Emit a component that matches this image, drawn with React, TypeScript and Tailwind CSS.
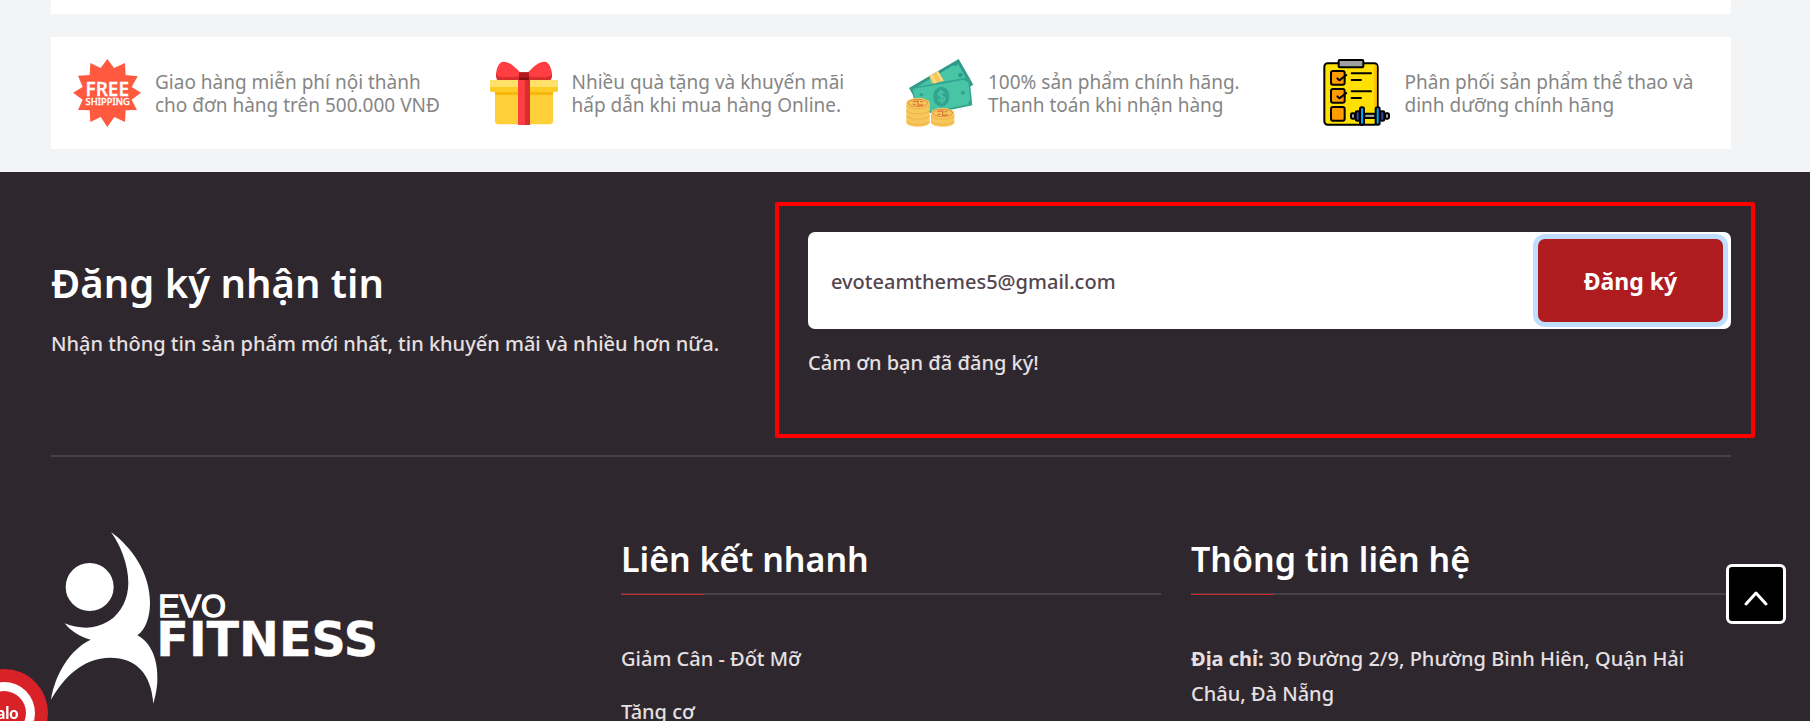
import { useState } from "react";
import type { FormEvent, ReactNode } from "react";

type Service = {
  icon: ReactNode;
  lines: [string, string];
};

function FreeShippingIcon() {
  return (
    <svg viewBox="0 0 204 204" className="size-[68px] shrink-0" aria-hidden="true">
      <path
        fill="#ff5a3f"
        d="M103 0 123 27 156 12 158 48 194 52 176 84 204 101 176 122 192 153 158 154 156 189 124 174 103 204 83 174 52 189 50 154 15 153 29 122 0 101 29 84 15 50 50 48 52 12 83 27Z"
      />
      <text x="103" y="110" textAnchor="middle" fill="#fff" stroke="#fff" strokeWidth="1" fontFamily="Open Sans, sans-serif" fontSize="57" fontWeight="600">FREE</text>
      <text x="104" y="138" textAnchor="middle" fill="#fff" stroke="#fff" strokeWidth="1" fontFamily="Noto Sans, sans-serif" fontSize="28" fontWeight="500">SHIPPING</text>
    </svg>
  );
}

function GiftIcon() {
  return (
    <svg viewBox="0 0 204 204" className="size-[68px] shrink-0" aria-hidden="true">
      <path fill="#d82d2d" d="M22 63C17 55 17 45 20 38L90 40h24l70-2c3 8 3 18-2 25Z" />
      <path fill="#ff3e43" d="M90 40C75 25 60 8 40 8 26 8 18 32 19 44c1 14 42 12 69 8ZM114 40c15-15 30-32 50-32 14 0 22 24 21 36-1 14-42 12-69 8Z" />
      <path fill="#ffcf3a" d="M15 98h174v88q0 10-10 10H25q-10 0-10-10Z" />
      <path fill="#f6b80f" d="M15 98h174v10H15Z" />
      <path fill="#ffe06a" d="M0 63h204v22H0Z" />
      <path fill="#ffcb25" d="M0 84h204v10q0 5-5 5H5q-5 0-5-5Z" />
      <path fill="#ff3e43" d="M84 63h21v135H84Z" />
      <path fill="#d82d2d" d="M105 63h15v135h-15Z" />
      <path fill="#b3191d" d="M87 40h30v23H87Z" />
      <path fill="#870f10" d="M87 56h30v7H87Z" />
    </svg>
  );
}

function CoinStack({ x, top }: { x: number; top: number }) {
  return (
    <g>
      <path fill="#f8c75b" d={`M${x} ${top}V190C${x} 208 ${x + 70} 208 ${x + 70} 190V${top}Z`} />
      {[190, 174, 158, 142].filter((y) => y > top + 8).map((y) => (
        <path key={y} fill="none" stroke="#eeb248" strokeWidth="3" d={`M${x} ${y - 4}C${x + 5} ${y + 10} ${x + 65} ${y + 10} ${x + 70} ${y - 4}`} />
      ))}
      <ellipse cx={x + 35} cy={top} rx="35" ry="15" fill="#fbd06a" />
      <ellipse cx={x + 35} cy={top} rx="30" ry="11" fill="#f8c75b" stroke="#e08a3c" strokeWidth="3" />
      <path fill="none" stroke="#dc7b37" strokeWidth="4" d={`M${x + 20} ${top - 3}q6-5 15 0v8q8 4 15-1M${x + 35} ${top - 9}V${top + 9}M${x + 20} ${top + 4}h9M${x + 41} ${top - 4}h8`} />
    </g>
  );
}

function MoneyIcon() {
  return (
    <svg viewBox="0 0 204 204" className="size-[68px] shrink-0" aria-hidden="true">
      <path fill="#2f9a8c" d="M9 87 158 0l44 77-149 86Z" />
      <path fill="#48c5a5" d="M22 90 142 19q8 6 14-5l31 55q-8 4-4 12l-130 70Z" />
      <circle cx="163" cy="48" r="7" fill="#2f9a8c" />
      <path fill="#f8c75b" d="m70 52 27-16 17 29-35 10Z" />
      <path fill="#fbe0a0" d="m74 50 4-3 15 27-5 1ZM91 40l4-3 16 28-5 1Z" />
      <path fill="#34a391" d="M16 86 190 54l9 85-120 25-50-20Z" />
      <path fill="#48c5a5" d="M21 90 175 62q3 9 12 7l6 56q-8 3-6 11L82 158 31 140Z" />
      <ellipse cx="106" cy="113" rx="24" ry="30" fill="#34a391" />
      <path fill="none" stroke="#48c5a5" strokeWidth="5" d="M115 103c-3-7-18-6-18 2s19 5 19 14-17 9-20 1M104 92l4 42" />
      <circle cx="171" cy="101" r="6" fill="#34a391" />
      <ellipse cx="46" cy="107" rx="6" ry="5" fill="#34a391" />
      <CoinStack x={1} top={132} />
      <CoinStack x={75} top={162} />
    </svg>
  );
}

function ClipboardIcon() {
  return (
    <svg viewBox="0 0 204 204" className="size-[68px] shrink-0" stroke="#000" strokeWidth="6" strokeLinecap="round" strokeLinejoin="round" aria-hidden="true">
      <rect x="4" y="13" width="160" height="184" rx="10" fill="#ffe000" />
      <path d="M153 18h8v174h-8Z" fill="#ffc400" stroke="none" />
      <rect x="47" y="3" width="74" height="22" rx="3" fill="#a0a0a0" />
      <g fill="#ff9c00">
        <rect x="24" y="36" width="41" height="41" rx="6" />
        <rect x="24" y="90" width="41" height="41" rx="6" />
        <rect x="24" y="144" width="41" height="41" rx="6" />
      </g>
      <path fill="none" d="m43 58 6 6 21-16M43 112l6 6 21-16M86 43h58M86 63h28M86 97h58M86 117h28" />
      <path d="M103 192h56v-46h-56Z" fill="#ffe000" stroke="none" />
      <rect x="84" y="163" width="12" height="16" rx="4" fill="#a0a0a0" />
      <rect x="186" y="163" width="12" height="16" rx="4" fill="#a0a0a0" />
      <rect x="98" y="157" width="12" height="28" rx="4" fill="#3547a8" />
      <rect x="172" y="157" width="12" height="28" rx="4" fill="#3547a8" />
      <path d="M124 164h33v13h-33Z" fill="#a0a0a0" />
      <rect x="111" y="145" width="12" height="52" rx="5" fill="#00a2ff" />
      <rect x="158" y="145" width="12" height="52" rx="5" fill="#00a2ff" />
    </svg>
  );
}

const services: Service[] = [
  { icon: <FreeShippingIcon />, lines: ["Giao hàng miễn phí nội thành", "cho đơn hàng trên 500.000 VNĐ"] },
  { icon: <GiftIcon />, lines: ["Nhiều quà tặng và khuyến mãi", "hấp dẫn khi mua hàng Online."] },
  { icon: <MoneyIcon />, lines: ["100% sản phẩm chính hãng.", "Thanh toán khi nhận hàng"] },
  { icon: <ClipboardIcon />, lines: ["Phân phối sản phẩm thể thao và", "dinh dưỡng chính hãng"] },
];

const quickLinks = ["Giảm Cân - Đốt Mỡ", "Tăng cơ"];

function Logo() {
  return (
    <svg viewBox="153 90 990 522" className="h-[174px] w-[330px]" fill="#fff" role="img" aria-label="EVO FITNESS">
      <circle cx="269" cy="258" r="72" />
      <path d="M333 93C395 138 450 215 450 305C450 350 436 385 412 403C455 425 475 480 472 540C471 565 465 590 460 608C454 520 410 470 330 470C250 470 190 530 153 596C165 520 210 445 272 416C240 408 212 390 194 367C240 385 285 386 325 361C366 335 385 290 385 245C385 190 360 130 333 93Z" />
      <text x="475" y="348" fontFamily="Liberation Sans, sans-serif" fontSize="96" stroke="#fff" strokeWidth="4">EVO</text>
      <text x="469" y="465" fontFamily="DejaVu Sans, sans-serif" fontSize="143" fontWeight="700" stroke="#fff" strokeWidth="1">FITNESS</text>
    </svg>
  );
}

function FooterTitle({ children }: { children: ReactNode }) {
  return (
    <div className="border-b-2 border-[#48414a] pt-1">
      <h2 className="pb-2.5 text-[34px] leading-[48px] font-semibold text-white">{children}</h2>
      <div className="relative -mb-0.5 h-0.5 w-[83px] border-b border-[#d0242c]" />
    </div>
  );
}

function Newsletter() {
  const [email, setEmail] = useState("evoteamthemes5@gmail.com");
  const [message, setMessage] = useState("Cảm ơn bạn đã đăng ký!");

  function submit(event: FormEvent) {
    event.preventDefault();
    setMessage("Cảm ơn bạn đã đăng ký!");
  }

  return (
    <section className="grid grid-cols-[minmax(0,757fr)_minmax(0,923fr)] border-b-2 border-[#48414a] pt-[60px] pb-[76px]">
      <div className="pt-6">
        <h2 className="text-[40px] leading-[54px] font-semibold text-white">Đăng ký nhận tin</h2>
        <p className="mt-[18px] text-xl leading-8">Nhận thông tin sản phẩm mới nhất, tin khuyến mãi và nhiều hơn nữa.</p>
      </div>
      <div className="relative">
        <form onSubmit={submit} className="flex h-[97px] items-stretch rounded-[7px] bg-white p-[7px] pr-2">
          <input
            type="email"
            aria-label="Email"
            value={email}
            onChange={(event) => setEmail(event.target.value)}
            className="min-w-0 flex-1 bg-transparent px-4 pt-0.5 text-xl font-medium text-[#54464f] outline-none"
          />
          <button type="submit" className="w-[185px] rounded-[7px] bg-[#ae1c20] pt-0.5 text-[23px] font-bold text-white ring-[5px] ring-[#bfdeff]">
            Đăng ký
          </button>
        </form>
        <p className="mt-[18px] text-xl leading-8">{message}</p>
        <div className="pointer-events-none absolute -top-[30px] -right-6 -left-[33px] h-[236px] rounded-xs border-4 border-[#ff0000]" />
      </div>
    </section>
  );
}

export default function App() {
  return (
    <div className="flex h-screen flex-col overflow-hidden bg-[#f3f4f6] font-['Noto_Sans','Open_Sans',sans-serif]">
      <main className="shrink-0 pr-[79px] pb-[23px] pl-[51px]">
        <div className="h-3.5 bg-white" />
        <ul className="mt-[23px] grid grid-cols-4 bg-white py-[22px] pr-1.5 pl-2">
          {services.map((service) => (
            <li key={service.lines[0]} className="flex items-center gap-3.5 px-3.5 text-[19px] leading-[23px] whitespace-nowrap text-[#868686]">
              {service.icon}
              <p className="pt-0.5">
                {service.lines[0]}
                <br />
                {service.lines[1]}
              </p>
            </li>
          ))}
        </ul>
      </main>

      <footer className="flex-1 bg-[#2f272e] pr-[79px] pl-[51px] font-medium text-[#e5e0e2]">
        <Newsletter />
        <div className="grid grid-cols-3 gap-[30px] pt-[74px]">
          <Logo />
          <div>
            <FooterTitle>Liên kết nhanh</FooterTitle>
            <ul className="mt-[46px] space-y-[18px] text-xl leading-[35px]">
              {quickLinks.map((link) => (
                <li key={link}>
                  <a href="#">{link}</a>
                </li>
              ))}
            </ul>
          </div>
          <div>
            <FooterTitle>Thông tin liên hệ</FooterTitle>
            <p className="mt-[46px] text-xl leading-[35px]">
              <b>Địa chỉ:</b> 30 Đường 2/9, Phường Bình Hiên, Quận Hải Châu, Đà Nẵng
            </p>
          </div>
        </div>
      </footer>

      <a href="#" aria-label="Zalo" className="fixed -bottom-9 -left-10 size-[88px]">
        <svg viewBox="0 0 88 88" aria-hidden="true">
          <circle cx="44" cy="44" r="44" fill="#d92128" />
          <circle cx="44" cy="44" r="31" fill="#fff" />
          <circle cx="44" cy="44" r="22" fill="#d92128" />
          <text x="43" y="50" textAnchor="middle" fill="#fff" fontFamily="Lato, sans-serif" fontSize="16" fontWeight="900">Zalo</text>
        </svg>
      </a>

      <button type="button" aria-label="Lên đầu trang" className="fixed right-6 bottom-[97px] flex size-[60px] items-center justify-center rounded-md border-[3px] border-white bg-black">
        <svg viewBox="0 0 24 24" className="mt-2.5 size-6" fill="none" stroke="#fff" strokeWidth="3" strokeLinecap="round" strokeLinejoin="round" aria-hidden="true">
          <path d="m2 17 10-11 10 11" />
        </svg>
      </button>
    </div>
  );
}
